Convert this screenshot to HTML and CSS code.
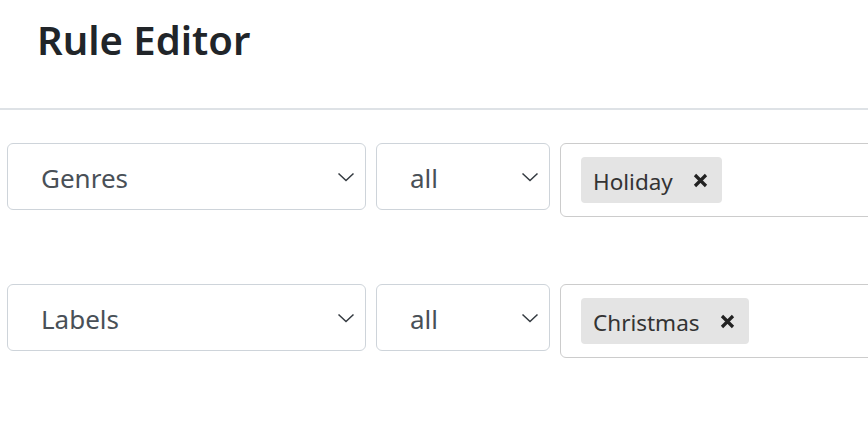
FILE: index.html
```html
<!DOCTYPE html>
<html>
<head>
<meta charset="utf-8">
<link rel="stylesheet" href="styles.css">
</head>
<body>
<header class="header">
  <h1 class="title">Rule Editor</h1>
</header>
<main class="rules">
  <div class="rule">
    <div class="select select-field"><span class="select-text">Genres</span><svg class="chev" width="18" height="10" viewBox="0 0 18 10"><path d="M1.5 1.5 L9 8.5 L16.5 1.5" fill="none" stroke="#343a40" stroke-width="1.5"/></svg></div>
    <div class="select select-op"><span class="select-text">all</span><svg class="chev" width="18" height="10" viewBox="0 0 18 10"><path d="M1.5 1.5 L9 8.5 L16.5 1.5" fill="none" stroke="#343a40" stroke-width="1.5"/></svg></div>
    <div class="tags">
      <span class="chip"><span class="chip-text">Holiday</span><svg class="chip-x" width="15" height="15" viewBox="0 0 15 15"><path d="M2 2 L13 13 M13 2 L2 13" stroke="#222" stroke-width="3.2"/></svg></span>
    </div>
  </div>
  <div class="rule">
    <div class="select select-field"><span class="select-text">Labels</span><svg class="chev" width="18" height="10" viewBox="0 0 18 10"><path d="M1.5 1.5 L9 8.5 L16.5 1.5" fill="none" stroke="#343a40" stroke-width="1.5"/></svg></div>
    <div class="select select-op"><span class="select-text">all</span><svg class="chev" width="18" height="10" viewBox="0 0 18 10"><path d="M1.5 1.5 L9 8.5 L16.5 1.5" fill="none" stroke="#343a40" stroke-width="1.5"/></svg></div>
    <div class="tags">
      <span class="chip"><span class="chip-text">Christmas</span><svg class="chip-x" width="15" height="15" viewBox="0 0 15 15"><path d="M2 2 L13 13 M13 2 L2 13" stroke="#222" stroke-width="3.2"/></svg></span>
    </div>
  </div>
</main>
</body>
</html>
```
FILE: styles.css
```css
html, body {
  margin: 0;
  padding: 0;
  background: #fff;
  overflow: hidden;
}
body {
  width: 868px;
  height: 448px;
  font-family: "Noto Sans", "Open Sans", sans-serif;
  color: #212529;
}
.header {
  padding: 16px 0 0 37px;
  height: 92px;
  border-bottom: 2px solid #dee2e6;
}
.title {
  margin: 0;
  font-size: 40px;
  line-height: 48px;
  font-weight: 600;
  color: #212529;
}
.rules {
  padding: 33px 0 0 7px;
  display: flex;
  flex-direction: column;
  gap: 67px;
}
.rule {
  display: flex;
  align-items: flex-start;
  gap: 10px;
}
.select {
  box-sizing: border-box;
  height: 67px;
  border: 1.5px solid #ced4da;
  border-radius: 6px;
  display: flex;
  align-items: center;
  justify-content: space-between;
  padding: 3px 10px 0 33px;
  flex-shrink: 0;
}
.select-field { width: 359px; }
.select-op { width: 174px; }
.select-text {
  font-size: 26px;
  color: #495057;
}
.chev { margin-top: -3px; }
.tags {
  box-sizing: border-box;
  width: 340px;
  height: 74px;
  flex-shrink: 0;
  border: 1.5px solid #ccc;
  border-radius: 6px;
  padding: 13px 0 0 20px;
}
.chip {
  display: inline-flex;
  align-items: center;
  height: 46px;
  box-sizing: border-box;
  background: #e4e4e4;
  border-radius: 4px;
  padding: 2px 14px 0 12px;
}
.chip-text {
  font-size: 22.5px;
  color: #333;
}
.chip-x {
  margin-left: 20px;
  margin-top: -2px;
}
```
